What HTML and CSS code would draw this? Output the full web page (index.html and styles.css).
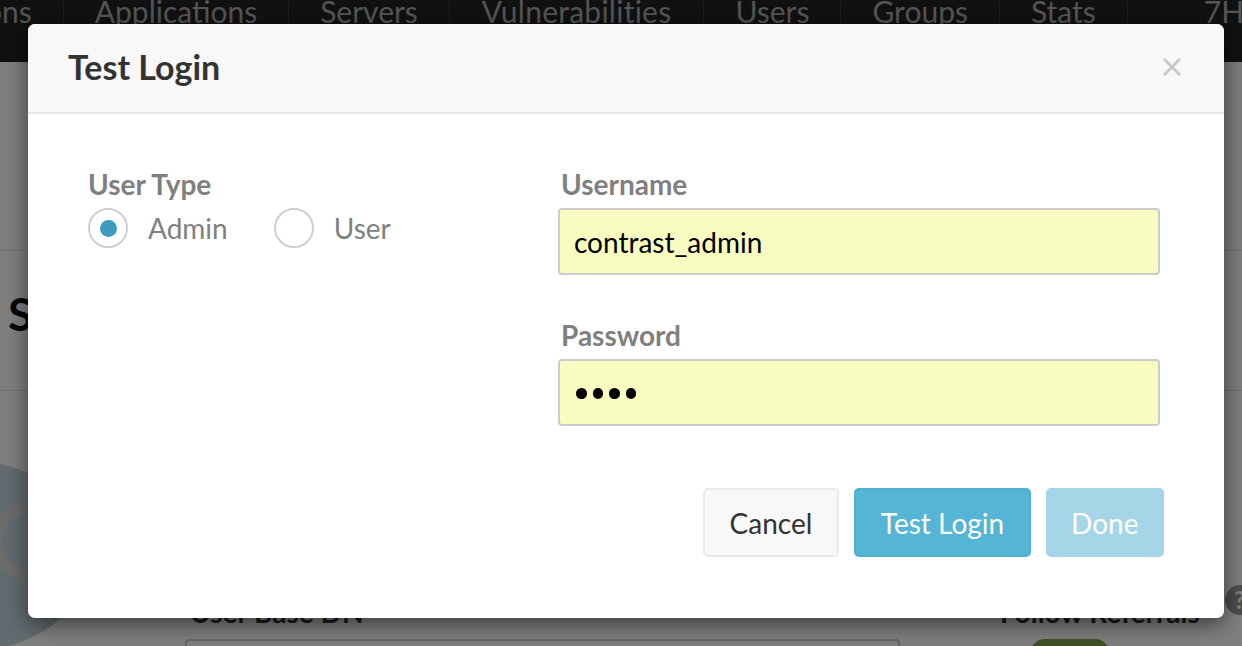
FILE: index.html
```html
<!DOCTYPE html>
<html>
<head>
<meta charset="utf-8">
<link rel="stylesheet" href="styles.css">
</head>
<body>
<div class="page">
  <nav class="topnav">
    <span class="nav-item first">ons</span>
    <span class="nav-item">Applications</span>
    <span class="nav-item">Servers</span>
    <span class="nav-item wide">Vulnerabilities</span>
    <span class="nav-item">Users</span>
    <span class="nav-item">Groups</span>
    <span class="nav-item">Stats</span>
    <span class="nav-item last">7H</span>
  </nav>
  <div class="subbar"></div>
  <div class="section-title"><h1>Settings</h1></div>
  <div class="content">
    <div class="logo-blob"><div class="logo-ring"></div></div>
    <div class="lower-row">
      <div class="field-bg">
        <div class="bg-label">User Base DN</div>
        <div class="bg-input"></div>
      </div>
      <div class="field-bg right">
        <div class="bg-label">Follow Referrals <span class="help">?</span></div>
        <div class="bg-toggle"></div>
      </div>
    </div>
  </div>
</div>

<div class="overlay"></div>

<div class="modal">
  <div class="modal-header">
    <h2 class="modal-title">Test Login</h2>
    <svg class="close" width="20" height="20" viewBox="0 0 20 20" aria-label="Close">
      <path d="M2 2 L18 18 M18 2 L2 18" stroke="#c6c6c6" stroke-width="2.6" stroke-linecap="butt" fill="none"/>
    </svg>
  </div>
  <div class="modal-body">
    <div class="col-left">
      <div class="label">User Type</div>
      <div class="radios">
        <label class="radio"><span class="circle checked"></span>Admin</label>
        <label class="radio"><span class="circle"></span>User</label>
      </div>
    </div>
    <div class="col-right">
      <div class="label">Username</div>
      <div class="input">contrast_admin</div>
      <div class="label pw">Password</div>
      <div class="input dots"><span class="dot"></span><span class="dot"></span><span class="dot"></span><span class="dot"></span></div>
    </div>
  </div>
  <div class="modal-footer">
    <button class="btn btn-default">Cancel</button>
    <button class="btn btn-primary">Test Login</button>
    <button class="btn btn-disabled">Done</button>
  </div>
</div>
</body>
</html>
```
FILE: styles.css
```css
* { box-sizing: border-box; }
html, body { margin: 0; padding: 0; }
body {
  width: 1242px;
  height: 646px;
  overflow: hidden;
  font-family: Lato, "Open Sans", sans-serif;
  background: #fff;
  position: relative;
}
.page { width: 1242px; height: 646px; overflow: hidden; }
.topnav {
  height: 62px;
  background: #222;
  display: flex;
  align-items: flex-start;
  overflow: hidden;
  white-space: nowrap;
}
.nav-item {
  flex-shrink: 0;
  font-size: 30px;
  line-height: 30px;
  margin-top: -4px;
  color: #aaa;
  padding: 0 31px;
  height: 66px;
  border-right: 1px solid #3a3a3a;
}
.nav-item.wide { padding: 0 32px 0 32px; letter-spacing: 0.25px; }
.nav-item.first { padding-left: 0; margin-left: -15px; }
.nav-item.last { border-right: none; padding-left: 76px; }
.subbar { height: 189px; border-bottom: 1px solid #ddd; background: #fcfcfc; }
.section-title { height: 140px; border-bottom: 1px solid #ddd; padding-left: 8px; }
.section-title h1 { margin: 0; padding-top: 38px; font-size: 46px; font-weight: 700; color: #111; line-height: 50px; }
.content { position: relative; height: 260px; }
.logo-blob {
  position: absolute; left: -150px; top: 70px;
  width: 240px; height: 190px; border-radius: 50%;
  background: #c4d6e0;
}
.logo-ring {
  position: absolute; left: 140px; top: 40px;
  width: 80px; height: 80px; border-radius: 50%;
  border: 12px solid #d9d9d9;
}
.lower-row { position: absolute; left: 0; right: 0; top: 206px; display: flex; }
.field-bg { flex-shrink: 0; margin-left: 185px; width: 715px; }
.field-bg.right { margin-left: 95px; width: 300px; }
.bg-label { font-size: 28px; font-weight: 700; color: #333; padding-left: 5px; line-height: 30px; white-space: nowrap; }
.bg-input { margin-top: 12px; height: 50px; border: 2px solid #ccc; border-radius: 4px; }
.help { display: inline-block; width: 30px; height: 30px; border-radius: 50%; background: #999; color: #fff; font-size: 24px; text-align: center; line-height: 30px; margin-left: 18px; vertical-align: top; margin-top: -12px; }
.bg-toggle { margin: 12px 0 0 35px; width: 80px; height: 30px; border-radius: 15px; background: #7ea04a; }

.overlay {
  position: absolute; inset: 0;
  background: rgba(0,0,0,0.5);
}
.modal {
  position: absolute;
  left: 28px; top: 24px;
  width: 1196px; height: 594px;
  background: #fff;
  border-radius: 7px;
  box-shadow: 0 6px 22px rgba(0,0,0,0.55);
  overflow: hidden;
}
.modal-header {
  height: 90px;
  background: #f8f8f8;
  border-bottom: 2px solid #e6e6e6;
  display: flex;
  align-items: center;
  justify-content: space-between;
  padding: 0 42px 0 40px;
}
.modal-title { margin: 0; font-size: 34px; font-weight: 700; color: #333; line-height: 40px; padding-bottom: 2px; }
.close { display: block; margin-top: -2px; }
.modal-body {
  display: flex;
  justify-content: space-between;
  padding: 52px 64px 0 60px;
  height: 374px;
}
.col-left { width: 400px; }
.col-right { width: 602px; }
.label { font-size: 28px; font-weight: 700; color: #808080; line-height: 36px; padding-left: 0; }
.col-right .label { padding-left: 3px; }
.label.pw { margin-top: 42px; }
.radios { display: flex; margin-top: 6px; }
.radio { display: flex; align-items: center; font-size: 28px; color: #808080; margin-right: 46px; line-height: 40px; }
.circle {
  width: 40px; height: 40px; border-radius: 50%;
  border: 2px solid #cfcfcf; background: #fff;
  margin-right: 20px;
  display: flex; align-items: center; justify-content: center;
}
.circle.checked::after {
  content: ""; width: 17px; height: 17px; border-radius: 50%; background: #3d9bbd;
}
.input {
  margin-top: 6px;
  height: 67px;
  background: #f9fcc0;
  border: 2px solid #cccccc;
  border-radius: 4px;
  font-size: 28px;
  color: #000;
  padding: 0 14px;
  display: flex; align-items: center;
}
.input.dots { gap: 6px; padding-left: 16px; padding-top: 2px; }
.dot { width: 10.5px; height: 10.5px; border-radius: 50%; background: #000; }
.modal-footer {
  display: flex; justify-content: flex-end; gap: 15px;
  padding: 0 60px;
}
.btn {
  font-family: Lato, "Open Sans", sans-serif;
  font-size: 28px; height: 69px; border-radius: 5px;
  padding: 0 23.5px; border: 2px solid transparent;
  line-height: 1;
}
.btn-default { background: #f8f8f8; border-color: #ebebeb; color: #333; padding: 0 25px; }
.btn-primary { background: #55b5d5; border-color: #50b0d1; color: #fff; padding: 0 24.5px; }
.btn-disabled { background: #a4d6e8; border-color: #a4d6e8; color: #fff; }
```
